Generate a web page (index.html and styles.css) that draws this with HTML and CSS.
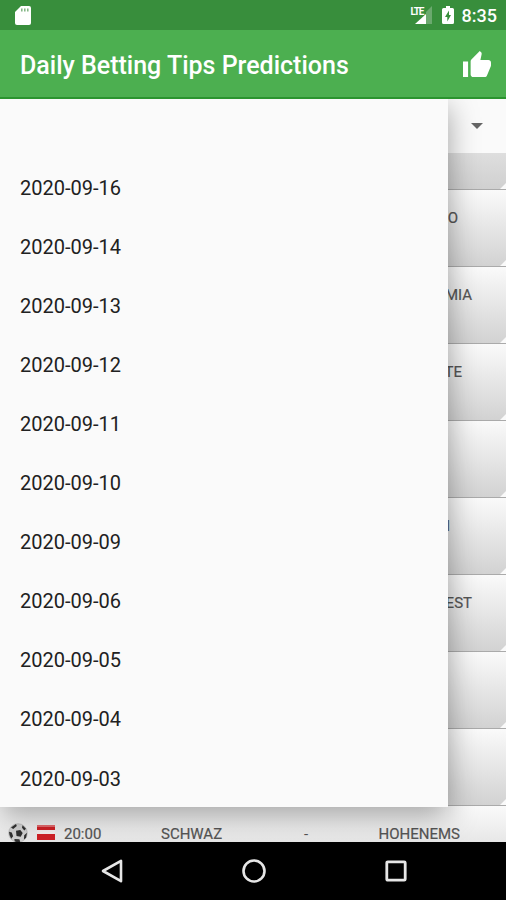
FILE: index.html
```html
<!DOCTYPE html>
<html lang="en">
<head>
    <meta charset="UTF-8">
    <meta name="viewport" content="width=device-width, initial-scale=1.0">
    <title>Daily Betting Tips Predictions</title>
    <link rel="stylesheet" href="styles.css">
</head>
<body>
    <div class="screen">
        <div class="status-bar">
            <svg class="sd-card" width="16" height="20" viewBox="0 0 16 20">
                <path fill="#fff" d="M6 0h8a2 2 0 0 1 2 2v15a2 2 0 0 1-2 2H2a2 2 0 0 1-2-2V6z"/>
                <path stroke="#7fb481" stroke-width="1.5" d="M6.8 2.5v3M9.8 2.5v3M12.8 2.5v3"/>
            </svg>
            <div class="status-right">
                <span class="signal">
                    <svg width="22" height="18" viewBox="0 0 22 18">
                        <path fill="#6ba96e" d="M22 0v18h-6V6z"/>
                        <path fill="#fff" d="M16 8v10H5z"/>
                    </svg>
                    <span class="lte">LTE</span>
                </span>
                <svg class="battery" width="12" height="18" viewBox="0 0 12 18">
                    <path fill="#fff" d="M4 0h4v2h2.500a1.500 1.500 0 0 1 1.500 1.500v13a1.500 1.500 0 0 1-1.500 1.500h-9A1.500 1.500 0 0 1 0 16.500v-13A1.500 1.500 0 0 1 1.500 2H4z"/>
                    <path fill="#388e3c" d="M7 4.500L3 11h2.300v4.500L9 9H7z"/>
                </svg>
                <span class="clock">8:35</span>
            </div>
        </div>

        <div class="app-bar">
            <h1>Daily Betting Tips Predictions</h1>
            <svg width="28" height="26" viewBox="1 1 22 20" preserveAspectRatio="none">
                <path fill="#fff" d="M1 21h4V9H1v12zm22-11c0-1.100-.9-2-2-2h-6.310l.95-4.570.03-.32c0-.41-.17-.79-.44-1.060L14.170 1 7.590 7.590C7.220 7.950 7 8.450 7 9v10c0 1.100.9 2 2 2h9c.83 0 1.540-.5 1.840-1.220l3.020-7.050c.09-.23.14-.47.14-.73v-2z"/>
            </svg>
        </div>

        <div class="content">
            <div class="spinner"><span class="caret"></span></div>
            <div class="match match-first"></div>
            <div class="match"><span class="away end-458">O</span></div>
            <div class="match"><span class="away end-472">MIA</span></div>
            <div class="match"><span class="away end-462">TE</span></div>
            <div class="match"></div>
            <div class="match"><span class="away end-450">I</span></div>
            <div class="match"><span class="away end-472">EST</span></div>
            <div class="match"></div>
            <div class="match"></div>
            <div class="match match-last">
                <svg class="ball" width="20" height="20" viewBox="0 0 20 20">
                    <circle cx="10" cy="10" r="9.300" fill="#d2d2d2" stroke="#aaa" stroke-width=".6"/>
                    <path fill="#303030" d="M8 7.800l4.300-.9 2.400 3.100-2 3.700-4.200-.6zM3 4.400L8 1.100l.8 2-3.600 3zM14.500 2.200l3.500 3.600-1.700 1.700-2.300-2.800zM1 8.800l2.800.7 1.300 3.800-1.900 2.400Q1 12.500 1 8.800zM19 9.800l-.9 4.900-2.200 1.800.3-4.200zM6.400 16l5 .3.800 2.500q-3 .9-5.600-.5z"/>
                </svg>
                <svg class="flag" width="18" height="15" viewBox="0 0 18 15">
                    <path fill="#cf2026" d="M0 0h18v15H0z"/>
                    <path fill="#f5eeee" d="M0 5h18v4H0z"/>
                    <path fill="#e36a6d" d="M0 0h18v2H0z"/>
                </svg>
                <span class="time">20:00</span>
                <span class="home">SCHWAZ</span>
                <span class="dash">-</span>
                <span class="away end-460">HOHENEMS</span>
            </div>

            <ul class="dropdown">
                <li></li>
                <li>2020-09-16</li>
                <li>2020-09-14</li>
                <li>2020-09-13</li>
                <li>2020-09-12</li>
                <li>2020-09-11</li>
                <li>2020-09-10</li>
                <li>2020-09-09</li>
                <li>2020-09-06</li>
                <li>2020-09-05</li>
                <li>2020-09-04</li>
                <li>2020-09-03</li>
            </ul>
        </div>

        <div class="nav-bar">
            <svg width="22" height="24" viewBox="0 0 22 24">
                <path fill="none" stroke="#e6e6e6" stroke-width="2.600" stroke-linejoin="round" d="M20 1.800v20.400L2 12z"/>
            </svg>
            <svg width="24" height="24" viewBox="0 0 24 24">
                <circle cx="12" cy="12" r="10.500" fill="none" stroke="#e6e6e6" stroke-width="2.600"/>
            </svg>
            <svg width="22" height="22" viewBox="0 0 22 22">
                <rect x="1.800" y="1.800" width="18.400" height="18.400" rx="1" fill="none" stroke="#e6e6e6" stroke-width="2.800"/>
            </svg>
        </div>
    </div>
</body>
</html>
```
FILE: styles.css
```css
:root {
    --green: #4caf50;
    --green-dark: #388e3c;
    --popup: #fafafa;
}

* {
    box-sizing: border-box;
}

body {
    margin: 0;
    font-family: Roboto, sans-serif;
}

.screen {
    width: 506px;
    height: 900px;
    display: flex;
    flex-direction: column;
    overflow: hidden;
}

.status-bar {
    height: 30px;
    flex: none;
    display: flex;
    justify-content: space-between;
    padding: 6px 9px 0 15px;
    background-color: var(--green-dark);
    color: #fff;
}

.status-right {
    display: flex;
}

.signal {
    position: relative;
    width: 22px;
    margin-right: 10px;
}

.lte {
    position: absolute;
    left: 1px;
    top: 1px;
    font-size: 10px;
    line-height: 9px;
    font-weight: 700;
    letter-spacing: -1.2px;
}

.clock {
    margin-left: 8px;
    font-size: 18px;
    line-height: 20px;
    font-weight: 500;
}

.app-bar {
    height: 69px;
    flex: none;
    display: flex;
    align-items: center;
    justify-content: space-between;
    padding: 0 15px 0 20px;
    background-color: var(--green);
    border-bottom: 2px solid #2b942f;
    color: #fff;
}

.app-bar h1 {
    margin: 0;
    padding-top: 4px;
    font-size: 25px;
    font-weight: 500;
}

.content {
    position: relative;
    height: 743px;
    flex: none;
    overflow: hidden;
    background-color: #fafafa;
}

.spinner {
    height: 54px;
    display: flex;
    align-items: center;
    justify-content: flex-end;
    padding-right: 23px;
}

.caret {
    border: 6px solid transparent;
    border-top-color: #666;
    border-bottom: none;
}

.match {
    position: relative;
    height: 77px;
    display: flex;
    align-items: flex-start;
    padding-top: 18px;
    background: linear-gradient(#fafafa, #d2d2d2);
    border-bottom: 1px solid #aaa;
    color: #555;
    font-size: 15px;
    line-height: 20px;
}

/* cut bottom right corner */
.match::after {
    content: "";
    position: absolute;
    right: 0;
    bottom: 0;
    border-left: 6px solid transparent;
    border-bottom: 6px solid #fafafa;
}

.match-first {
    height: 37px;
    background: linear-gradient(#dedede, #d0d0d0);
}

.match-last {
    padding-left: 8px;
}

.away,
.home,
.time {
    -webkit-text-stroke: 0.2px #555;
}

.away {
    margin-left: auto;
}

.end-450 { margin-right: 56px; }
.end-458 { margin-right: 48px; }
.end-460 { margin-right: 46px; }
.end-462 { margin-right: 44px; }
.end-472 { margin-right: 34px; }

.ball {
    margin-top: -1px;
}

.flag {
    margin: 1px 9px 0 9px;
}

.time {
    width: 97px;
}

.home {
    width: 143px;
}

.dropdown {
    position: absolute;
    left: 0;
    top: 0;
    width: 448px;
    height: 708px;
    margin: 0;
    padding: 0;
    list-style: none;
    background-color: var(--popup);
    box-shadow: 0 8px 28px rgba(0, 0, 0, 0.36);
    color: #212121;
    font-size: 20px;
}

.dropdown li {
    height: 59.05px;
    padding-left: 20px;
    line-height: 61px;
}

.nav-bar {
    height: 58px;
    flex: none;
    display: flex;
    align-items: center;
    justify-content: space-between;
    padding: 0 99px 0 101px;
    background-color: #000;
}
```
